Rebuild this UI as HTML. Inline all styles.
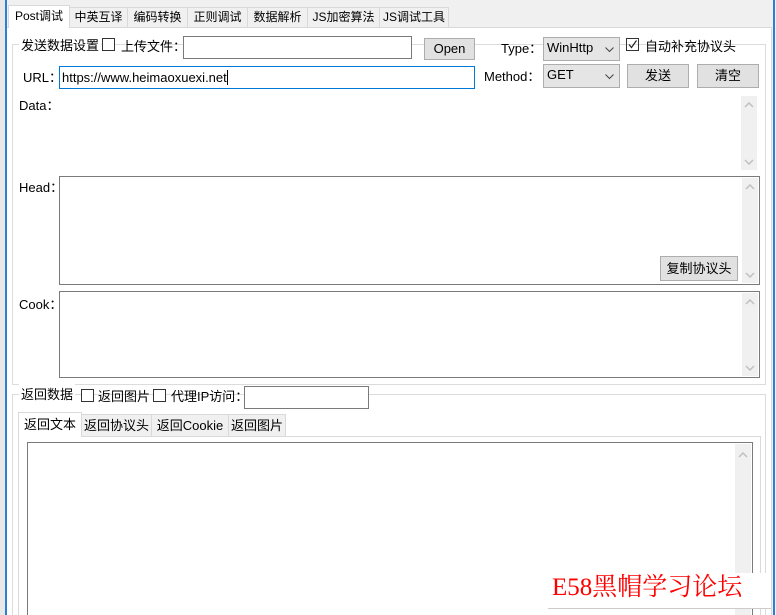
<!DOCTYPE html><html><head><meta charset="utf-8"><style>
*{box-sizing:border-box;margin:0;padding:0}
html{width:776px;height:615px;overflow:hidden}
body{width:776px;height:615px;overflow:hidden;background:#f0f0f0;position:relative;font:12px "Liberation Sans","Noto Sans CJK SC",sans-serif;color:#000}
.a{position:absolute}
.tab{position:absolute;top:7px;height:21px;border:1px solid #d9d9d9;background:#f0f0f0;font-size:12px;line-height:19px;text-align:center}
.pg{background:#fff}
.gb{position:absolute;border:1px solid #dcdcdc}
.inp{position:absolute;background:#fff;border:1px solid #7a7a7a}
.btn{position:absolute;background:#e1e1e1;border:1px solid #adadad;text-align:center;font-size:13px}
.cb{position:absolute;width:13px;height:13px;border:1px solid #333;background:#fff}
.sb{position:absolute;background:#f0f0f0;width:16px}
.sb svg{position:absolute;left:3px}
.lbl{position:absolute;font-size:13px;white-space:nowrap}
.cmb{position:absolute;background:#e5e5e5;border:1px solid #adadad;font-size:13px;padding-left:3px;line-height:20px}
.cmb svg{position:absolute;right:5px;top:9px}
</style></head><body>
<div class="a" style="left:0;top:0;width:5px;height:615px;background:#e8e8e8"></div>
<div class="a" style="left:5px;top:0;width:2px;height:615px;background:#2a7fd6"></div>
<div class="a" style="left:773px;top:0;width:2px;height:615px;background:#2a7fd6"></div>
<div class="a pg" style="left:7px;top:27px;width:765px;height:590px;border:1px solid #d9d9d9;border-left:none"></div>
<div class="tab pg" style="left:8px;top:5px;width:62px;height:23px;border-bottom:none;line-height:21px">Post调试</div>
<div class="tab" style="left:69px;width:59px">中英互译</div>
<div class="tab" style="left:127px;width:61px">编码转换</div>
<div class="tab" style="left:187px;width:61px">正则调试</div>
<div class="tab" style="left:247px;width:61px">数据解析</div>
<div class="tab" style="left:307px;width:73px">JS加密算法</div>
<div class="tab" style="left:379px;width:70px">JS调试工具</div>
<div class="gb" style="left:12px;top:44px;width:754px;height:341px"></div>
<div class="lbl" style="left:19px;top:35px;background:#fff;padding:0 2px">发送数据设置</div>
<div class="cb" style="left:102px;top:38px"></div>
<div class="lbl" style="left:121px;top:36px">上传文件：</div>
<div class="inp" style="left:183px;top:36px;width:229px;height:23px"></div>
<div class="btn" style="left:424px;top:38px;width:51px;height:22px;line-height:20px">Open</div>
<div class="lbl" style="left:501px;top:38px">Type：</div>
<div class="cmb" style="left:543px;top:37px;width:77px;height:24px">WinHttp<svg width="9" height="6"><path d="M0.5 0.5L4.5 4.5L8.5 0.5" fill="none" stroke="#444"/></svg></div>
<div class="a" style="left:626px;top:38px;width:13px;height:13px;border:1px solid #333"><svg width="11" height="11" style="position:absolute;left:0;top:0"><path d="M2 5.5L4.5 8.5L9.5 1.5" fill="none" stroke="#222" stroke-width="1.2"/></svg></div>
<div class="lbl" style="left:645px;top:36px">自动补充协议头</div>
<div class="lbl" style="left:23px;top:67px">URL：</div>
<div class="inp" style="left:59px;top:66px;width:416px;height:23px;border-color:#0078d7;font-size:13px;padding:2px 2px;line-height:17px">https://www.heimaoxuexi.net<span style="border-left:1px solid #000">&nbsp;</span></div>
<div class="lbl" style="left:484px;top:66px">Method：</div>
<div class="cmb" style="left:543px;top:64px;width:77px;height:24px">GET<svg width="9" height="6"><path d="M0.5 0.5L4.5 4.5L8.5 0.5" fill="none" stroke="#444"/></svg></div>
<div class="btn" style="left:627px;top:64px;width:62px;height:24px;line-height:22px">发送</div>
<div class="btn" style="left:697px;top:64px;width:62px;height:24px;line-height:22px">清空</div>
<div class="lbl" style="left:19px;top:95px">Data：</div>
<div class="sb" style="left:741px;top:96px;height:74px"><svg width="10" height="6" style="top:6px"><path d="M1 5L5 1L9 5" fill="none" stroke="#c0c0c0" stroke-width="1.5"/></svg><svg width="10" height="6" style="bottom:5px"><path d="M1 1L5 5L9 1" fill="none" stroke="#c0c0c0" stroke-width="1.5"/></svg></div>
<div class="lbl" style="left:19px;top:177px">Head：</div>
<div class="inp" style="left:59px;top:176px;width:701px;height:109px"></div>
<div class="sb" style="left:742px;top:178px;height:105px"><svg width="10" height="6" style="top:6px"><path d="M1 5L5 1L9 5" fill="none" stroke="#c0c0c0" stroke-width="1.5"/></svg><svg width="10" height="6" style="bottom:5px"><path d="M1 1L5 5L9 1" fill="none" stroke="#c0c0c0" stroke-width="1.5"/></svg></div>
<div class="btn" style="left:660px;top:256px;width:78px;height:25px;line-height:23px">复制协议头</div>
<div class="lbl" style="left:19px;top:294px">Cook：</div>
<div class="inp" style="left:59px;top:291px;width:701px;height:87px"></div>
<div class="sb" style="left:742px;top:293px;height:83px"><svg width="10" height="6" style="top:6px"><path d="M1 5L5 1L9 5" fill="none" stroke="#c0c0c0" stroke-width="1.5"/></svg><svg width="10" height="6" style="bottom:5px"><path d="M1 1L5 5L9 1" fill="none" stroke="#c0c0c0" stroke-width="1.5"/></svg></div>
<div class="gb" style="left:12px;top:394px;width:754px;height:230px"></div>
<div class="lbl" style="left:19px;top:384px;background:#fff;padding:0 2px">返回数据</div>
<div class="cb" style="left:81px;top:389px"></div>
<div class="lbl" style="left:98px;top:386px">返回图片</div>
<div class="cb" style="left:153px;top:389px"></div>
<div class="lbl" style="left:171px;top:386px">代理IP访问：</div>
<div class="inp" style="left:244px;top:386px;width:125px;height:23px"></div>
<div class="a" style="left:18px;top:436px;width:743px;height:190px;border:1px solid #d9d9d9"></div>
<div class="tab pg" style="left:18px;top:412px;width:64px;height:25px;border-bottom:none;line-height:23px;font-size:13px">返回文本</div>
<div class="tab" style="left:81px;top:414px;width:71px;height:23px;font-size:13px;line-height:21px">返回协议头</div>
<div class="tab" style="left:151px;top:414px;width:78px;height:23px;font-size:13px;line-height:21px">返回Cookie</div>
<div class="tab" style="left:228px;top:414px;width:58px;height:23px;font-size:13px;line-height:21px">返回图片</div>
<div class="inp" style="left:27px;top:442px;width:726px;height:190px"></div>
<div class="sb" style="left:735px;top:444px;height:175px"><svg width="10" height="6" style="top:8px"><path d="M1 5L5 1L9 5" fill="none" stroke="#c0c0c0" stroke-width="1.5"/></svg></div>
<div class="a" style="left:548px;top:573px;width:223px;height:36px;background:#fff;border-bottom:1px solid #ccc;color:#f00;font:25px 'Liberation Serif','Noto Serif CJK SC',serif;line-height:30px;padding-left:4px">E58黑帽学习论坛</div>
</body></html>
